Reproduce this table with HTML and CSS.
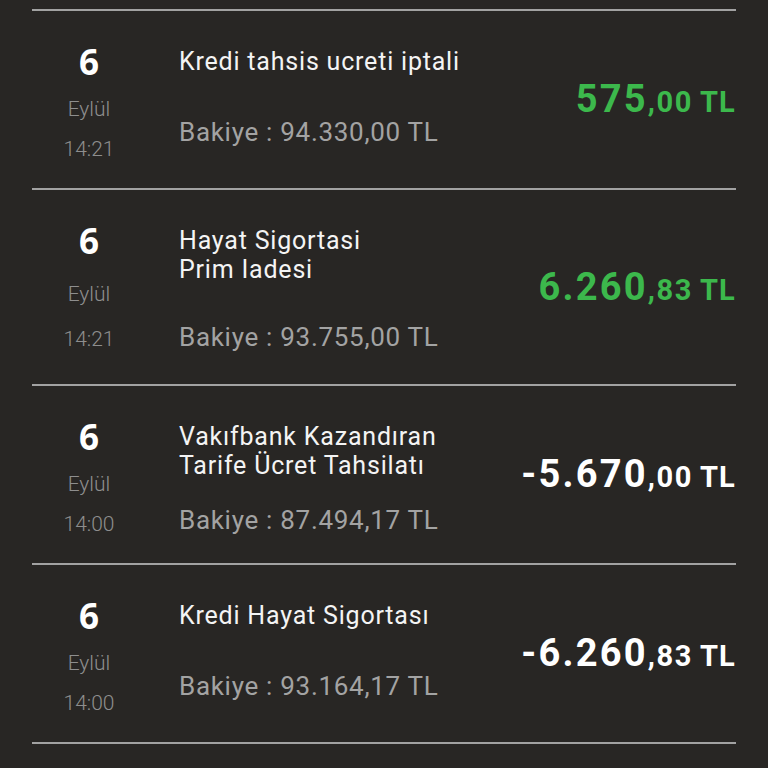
FILE: index.html
```html
<!DOCTYPE html>
<html lang="tr">
<head>
<meta charset="utf-8">
<title>Hesap Hareketleri</title>
<link rel="stylesheet" href="styles.css">
</head>
<body>
<div class="list">
  <div class="row">
    <div class="date">
      <div class="day">6</div>
      <div class="sub">
        <div class="month">Eylül</div>
        <div class="time">14:21</div>
      </div>
    </div>
    <div class="info">
      <div class="title">Kredi tahsis ucreti iptali</div>
      <div class="balance">Bakiye : 94.330,00 TL</div>
    </div>
    <div class="amount amount--in"><span class="int">575</span><span class="dec">,00</span><span class="cur">TL</span></div>
  </div>

  <div class="row row--tall">
    <div class="date">
      <div class="day">6</div>
      <div class="sub">
        <div class="month">Eylül</div>
        <div class="time">14:21</div>
      </div>
    </div>
    <div class="info">
      <div class="title">Hayat Sigortasi<br>Prim Iadesi</div>
      <div class="balance">Bakiye : 93.755,00 TL</div>
    </div>
    <div class="amount amount--in"><span class="int">6.260</span><span class="dec">,83</span><span class="cur">TL</span></div>
  </div>

  <div class="row row--two">
    <div class="date">
      <div class="day">6</div>
      <div class="sub">
        <div class="month">Eylül</div>
        <div class="time">14:00</div>
      </div>
    </div>
    <div class="info">
      <div class="title">Vakıfbank Kazandıran<br>Tarife Ücret Tahsilatı</div>
      <div class="balance">Bakiye : 87.494,17 TL</div>
    </div>
    <div class="amount"><span class="int">-5.670</span><span class="dec">,00</span><span class="cur">TL</span></div>
  </div>

  <div class="row">
    <div class="date">
      <div class="day">6</div>
      <div class="sub">
        <div class="month">Eylül</div>
        <div class="time">14:00</div>
      </div>
    </div>
    <div class="info">
      <div class="title">Kredi Hayat Sigortası</div>
      <div class="balance">Bakiye : 93.164,17 TL</div>
    </div>
    <div class="amount"><span class="int">-6.260</span><span class="dec">,83</span><span class="cur">TL</span></div>
  </div>
</div>
</body>
</html>
```

FILE: styles.css
```css
html, body {
  margin: 0;
  padding: 0;
  background: #282624;
}

body {
  font-family: Roboto, "Liberation Sans", sans-serif;
  color: #f4f4f4;
  height: 768px;
  overflow: hidden;
}

.list {
  margin: 0 32px;
  padding-top: 9px;
}

.row {
  display: flex;
  min-height: 177px;
  border-top: 2px solid #a2a2a2;
}

.row:last-child {
  border-bottom: 2px solid #a2a2a2;
}

.row--tall {
  min-height: 194px;
}

.date {
  width: 114px;
  flex: none;
  display: flex;
  flex-direction: column;
  align-items: center;
  padding-top: 31px;
  padding-bottom: 12px;
}

.day {
  font-family: "Open Sans", "Noto Sans", sans-serif;
  font-weight: 700;
  font-size: 35px;
  line-height: 40px;
  color: #ffffff;
}

.sub {
  flex: 1;
  display: flex;
  flex-direction: column;
  justify-content: space-evenly;
  align-items: center;
}

.month,
.time {
  font-weight: 300;
  font-size: 21px;
  line-height: 24px;
  color: #8e8e8e;
}

.info {
  flex: 1;
  padding-left: 33px;
  padding-top: 36px;
}

.title {
  font-size: 25px;
  line-height: 29px;
  letter-spacing: 0.8px;
  color: #f4f4f4;
}

.balance {
  margin-top: 41px;
  font-size: 26px;
  line-height: 30px;
  letter-spacing: 0.7px;
  color: #a3a3a3;
}

.row--two .balance {
  margin-top: 25px;
}

.row--tall .balance {
  margin-top: 38px;
}

.amount {
  align-self: center;
  margin-top: 7px;
  font-weight: 700;
  color: #ffffff;
  white-space: nowrap;
  line-height: 40px;
}

.amount--in {
  color: #3cb84c;
}

.int {
  font-size: 38px;
  letter-spacing: 2.2px;
}

.dec {
  font-size: 29px;
  letter-spacing: 1.6px;
}

.cur {
  font-size: 29px;
  letter-spacing: 1.2px;
  margin-left: 7px;
}
```
